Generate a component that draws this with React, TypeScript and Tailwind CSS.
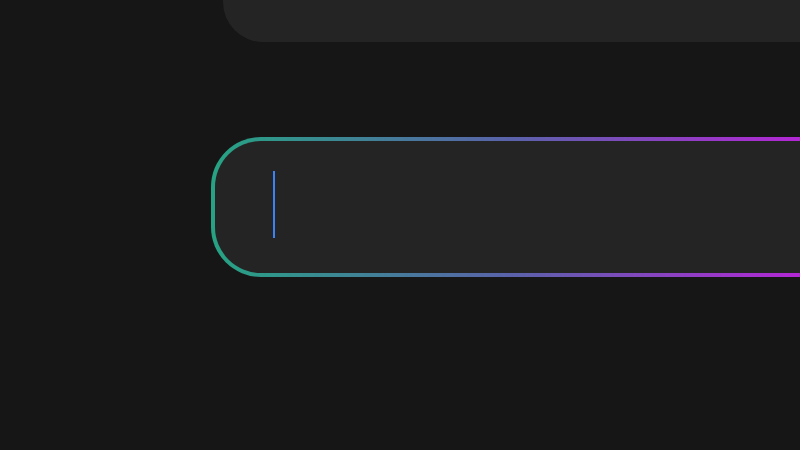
import React from "react";

export default function App() {
  return (
    <div className="w-[800px] h-[450px] bg-[#161616] overflow-hidden flex flex-col">
      <div className="ml-[223px] w-[700px] h-[42px] shrink-0 bg-[#242424] rounded-bl-[40px]" />
      <div className="ml-[211px] mt-[95px] w-[700px] h-[140px] shrink-0 rounded-[50px] p-[4px] bg-[linear-gradient(90deg,#26a383_0%,#5a62aa_50%,#b625d6_100%)] bg-[length:600px_100%] bg-no-repeat bg-[#c51fdc]">
        <div className="h-full w-full rounded-[46px] bg-[#242424] pl-[58px] pt-[30px]">
          <div className="w-[2px] h-[67px] bg-[#3b82f6]" />
        </div>
      </div>
    </div>
  );
}
